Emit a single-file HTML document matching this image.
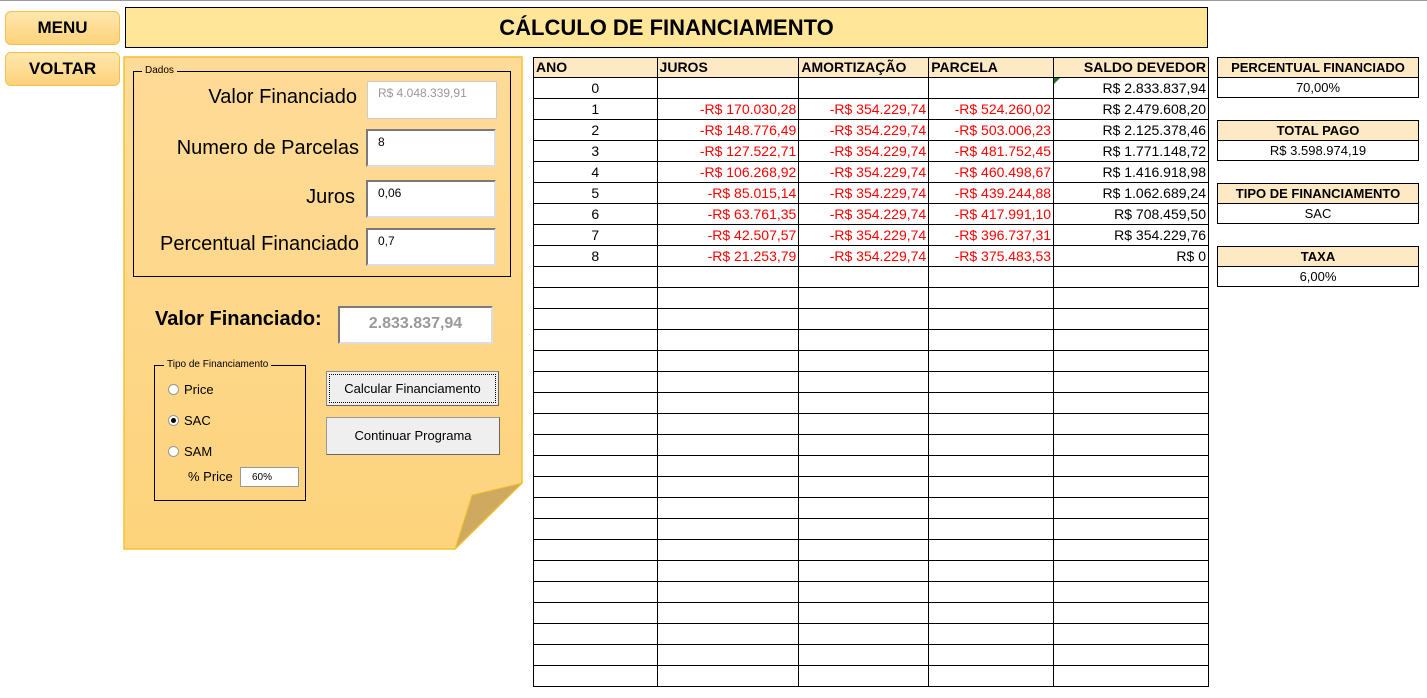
<!DOCTYPE html>
<html><head><meta charset="utf-8"><style>
*{margin:0;padding:0;box-sizing:border-box}
body{width:1427px;height:698px;background:#fff;position:relative;overflow:hidden;font-family:"Liberation Sans",Arial,sans-serif;color:#000}
.a{position:absolute}
.btn{position:absolute;left:5px;width:115px;height:34px;border:1px solid #f4c04a;border-radius:6px;background:linear-gradient(#ffe7ad,#fdd27c);font-weight:bold;font-size:17px;text-align:center;line-height:32px}
.inp{position:absolute;background:#fff;border:2px solid #7a7a7a;border-right-color:#ddd;border-bottom-color:#ddd;font-size:12px;padding:4px 10px}
.lbl{position:absolute;font-size:20px;text-align:right;width:240px}
table{border-collapse:collapse;position:absolute;font-size:14px}
td{border:1px solid #000;height:21px;padding:0 2px;white-space:nowrap;line-height:19px}
.h td{background:#fde9c4;font-weight:bold;height:20px}
.r{text-align:right;color:#f00}
.k{text-align:right}
.c{text-align:center}
.box{position:absolute;left:1217px;width:202px;font-size:13px;text-align:center}
.box div{border:1px solid #000;height:21px;line-height:20px}
.box div:first-child{background:#fde9c4;font-weight:bold;height:20px;border-bottom:none}
.rad{position:absolute;width:11px;height:11px;border-radius:50%;border:1px solid #999;background:#fff}
</style></head><body>
<div class="a" style="left:0;top:0;width:1427px;height:1px;background:#999"></div>
<div class="btn" style="top:11px">MENU</div>
<div class="btn" style="top:52px">VOLTAR</div>
<div class="a" style="left:125px;top:7px;width:1083px;height:41px;border:1px solid #000;background:#ffe699;text-align:center;font-weight:bold;font-size:22px;line-height:40px">CÁLCULO DE FINANCIAMENTO</div>

<svg class="a" style="left:123px;top:56px" width="401" height="495">
<defs><linearGradient id="g" x1="0" y1="0" x2="0" y2="1"><stop offset="0" stop-color="#fedb98"/><stop offset="1" stop-color="#fdd37c"/></linearGradient></defs>
<path d="M1 1H399V427L332 493H1Z" fill="url(#g)" stroke="#f5c12e" stroke-width="1.5"/>
<path d="M332 493L349 439L399 427Z" fill="#cfa95f" stroke="#f5c12e"/>
</svg>
<div class="a" style="left:133px;top:71px;width:378px;height:206px;border:1px solid #000"></div>
<div class="a" style="left:142px;top:65px;background:#fed993;font-size:10px;padding:0 3px">Dados</div>
<div class="lbl" style="left:117px;top:86px">Valor Financiado</div>
<div class="lbl" style="left:119px;top:137px">Numero de Parcelas</div>
<div class="lbl" style="left:115px;top:186px">Juros</div>
<div class="lbl" style="left:119px;top:233px">Percentual Financiado</div>
<div class="inp" style="left:367px;top:81px;width:130px;height:38px;color:#999;border-color:#ccc;border-width:1px">R$ 4.048.339,91</div>
<div class="inp" style="left:366px;top:129px;width:130px;height:38px">8</div>
<div class="inp" style="left:366px;top:180px;width:130px;height:38px">0,06</div>
<div class="inp" style="left:366px;top:228px;width:130px;height:38px">0,7</div>
<div class="a" style="left:155px;top:308px;font-weight:bold;font-size:20px">Valor Financiado:</div>
<div class="inp" style="left:338px;top:306px;width:155px;height:38px;font-size:16px;font-weight:bold;color:#999;text-align:center;padding:7px 0">2.833.837,94</div>
<div class="a" style="left:154px;top:365px;width:152px;height:136px;border:1px solid #000"></div>
<div class="a" style="left:164px;top:359px;background:#fed68a;font-size:10px;padding:0 3px">Tipo de Financiamento</div>
<div class="rad" style="left:168px;top:384px"></div><div class="a" style="left:184px;top:382px;font-size:13px">Price</div>
<div class="rad" style="left:168px;top:415px"><div style="width:5px;height:5px;background:#000;border-radius:50%;margin:2px"></div></div><div class="a" style="left:184px;top:413px;font-size:13px">SAC</div>
<div class="rad" style="left:168px;top:446px"></div><div class="a" style="left:184px;top:444px;font-size:13px">SAM</div>
<div class="a" style="left:188px;top:469px;font-size:13px">% Price</div>
<div class="a" style="left:240px;top:467px;width:59px;height:20px;background:#fff;border:1px solid #999;font-size:10px;padding:4px 11px">60%</div>
<div class="a" style="left:326px;top:371px;width:173px;height:35px;background:#efefef;border:1px solid #888;border-right-color:#666;border-bottom-color:#666;font-size:13px;text-align:center;line-height:33px;outline:1px dotted #000;outline-offset:-4px">Calcular Financiamento</div>
<div class="a" style="left:326px;top:417px;width:174px;height:38px;background:#efefef;border:1px solid #999;border-right-color:#666;border-bottom-color:#666;font-size:13px;text-align:center;line-height:36px">Continuar Programa</div>

<table style="left:533px;top:57px;width:676px">
<colgroup><col style="width:124px"><col style="width:142px"><col style="width:130px"><col style="width:125px"><col style="width:155px"></colgroup>
<tr class="h"><td>ANO</td><td>JUROS</td><td>AMORTIZAÇÃO</td><td>PARCELA</td><td class="k">SALDO DEVEDOR</td></tr>
<tr><td class="c">0</td><td></td><td></td><td></td><td class="k" style="position:relative">R$ 2.833.837,94<span style="position:absolute;left:0;top:0;border-top:6px solid #1a7a1a;border-right:6px solid transparent"></span></td></tr>
<tr><td class="c">1</td><td class="r">-R$ 170.030,28</td><td class="r">-R$ 354.229,74</td><td class="r">-R$ 524.260,02</td><td class="k">R$ 2.479.608,20</td></tr>
<tr><td class="c">2</td><td class="r">-R$ 148.776,49</td><td class="r">-R$ 354.229,74</td><td class="r">-R$ 503.006,23</td><td class="k">R$ 2.125.378,46</td></tr>
<tr><td class="c">3</td><td class="r">-R$ 127.522,71</td><td class="r">-R$ 354.229,74</td><td class="r">-R$ 481.752,45</td><td class="k">R$ 1.771.148,72</td></tr>
<tr><td class="c">4</td><td class="r">-R$ 106.268,92</td><td class="r">-R$ 354.229,74</td><td class="r">-R$ 460.498,67</td><td class="k">R$ 1.416.918,98</td></tr>
<tr><td class="c">5</td><td class="r">-R$ 85.015,14</td><td class="r">-R$ 354.229,74</td><td class="r">-R$ 439.244,88</td><td class="k">R$ 1.062.689,24</td></tr>
<tr><td class="c">6</td><td class="r">-R$ 63.761,35</td><td class="r">-R$ 354.229,74</td><td class="r">-R$ 417.991,10</td><td class="k">R$ 708.459,50</td></tr>
<tr><td class="c">7</td><td class="r">-R$ 42.507,57</td><td class="r">-R$ 354.229,74</td><td class="r">-R$ 396.737,31</td><td class="k">R$ 354.229,76</td></tr>
<tr><td class="c">8</td><td class="r">-R$ 21.253,79</td><td class="r">-R$ 354.229,74</td><td class="r">-R$ 375.483,53</td><td class="k">R$ 0</td></tr>
<tr><td></td><td></td><td></td><td></td><td></td></tr><tr><td></td><td></td><td></td><td></td><td></td></tr><tr><td></td><td></td><td></td><td></td><td></td></tr><tr><td></td><td></td><td></td><td></td><td></td></tr><tr><td></td><td></td><td></td><td></td><td></td></tr>
<tr><td></td><td></td><td></td><td></td><td></td></tr><tr><td></td><td></td><td></td><td></td><td></td></tr><tr><td></td><td></td><td></td><td></td><td></td></tr><tr><td></td><td></td><td></td><td></td><td></td></tr><tr><td></td><td></td><td></td><td></td><td></td></tr>
<tr><td></td><td></td><td></td><td></td><td></td></tr><tr><td></td><td></td><td></td><td></td><td></td></tr><tr><td></td><td></td><td></td><td></td><td></td></tr><tr><td></td><td></td><td></td><td></td><td></td></tr><tr><td></td><td></td><td></td><td></td><td></td></tr>
<tr><td></td><td></td><td></td><td></td><td></td></tr><tr><td></td><td></td><td></td><td></td><td></td></tr><tr><td></td><td></td><td></td><td></td><td></td></tr><tr><td></td><td></td><td></td><td></td><td></td></tr><tr><td></td><td></td><td></td><td></td><td></td></tr>
</table>

<div class="box" style="top:57px"><div>PERCENTUAL FINANCIADO</div><div>70,00%</div></div>
<div class="box" style="top:120px"><div>TOTAL PAGO</div><div>R$ 3.598.974,19</div></div>
<div class="box" style="top:183px"><div>TIPO DE FINANCIAMENTO</div><div>SAC</div></div>
<div class="box" style="top:246px"><div>TAXA</div><div>6,00%</div></div>
</body></html>
